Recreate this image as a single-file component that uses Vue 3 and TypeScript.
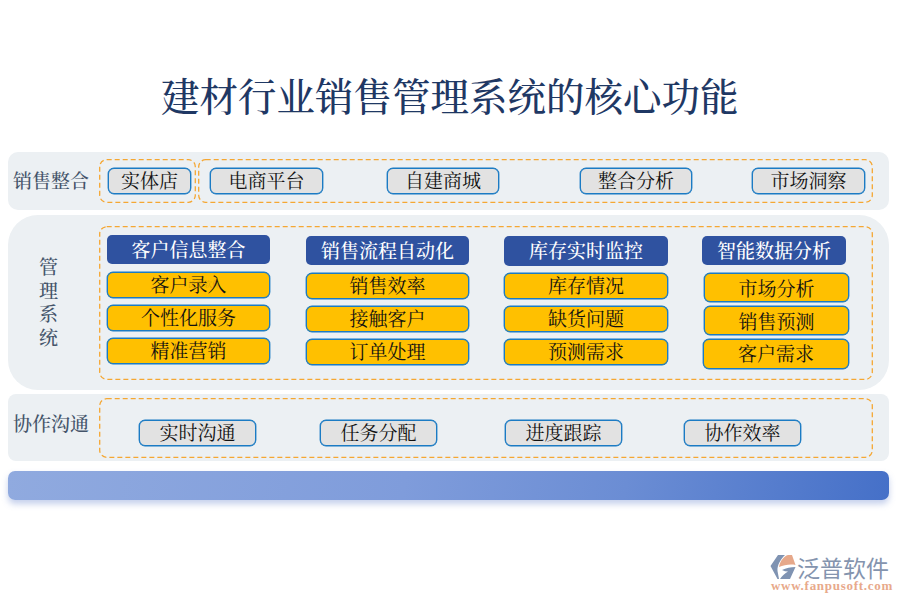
<script setup lang="ts">
const topChips: string[] = ['电商平台', '自建商城', '整合分析', '市场洞察']
const columns: { title: string; items: string[] }[] = [
  { title: '客户信息整合', items: ['客户录入', '个性化服务', '精准营销'] },
  { title: '销售流程自动化', items: ['销售效率', '接触客户', '订单处理'] },
  { title: '库存实时监控', items: ['库存情况', '缺货问题', '预测需求'] },
  { title: '智能数据分析', items: ['市场分析', '销售预测', '客户需求'] },
]
const collab: string[] = ['实时沟通', '任务分配', '进度跟踪', '协作效率']
</script>

<template>
  <div class="page">
    <h1 class="title">建材行业销售管理系统的核心功能</h1>

    <section class="band band-top">
      <div class="band-label">销售整合</div>
      <div class="dash dash-store">
        <svg class="dash-line"><rect /></svg>
        <span class="chip store">实体店</span>
      </div>
      <div class="dash dash-online">
        <svg class="dash-line"><rect /></svg>
        <span v-for="c in topChips" :key="c" class="chip wide">{{ c }}</span>
      </div>
    </section>

    <section class="band band-mgmt">
      <div class="mgmt-label">管理系统</div>
      <div class="dash dash-mgmt">
        <svg class="dash-line"><rect /></svg>
        <div v-for="col in columns" :key="col.title" class="col">
          <div class="col-head">{{ col.title }}</div>
          <div v-for="item in col.items" :key="item" class="item">{{ item }}</div>
        </div>
        <span class="ghost">泛普软件</span>
      </div>
    </section>

    <section class="band band-collab">
      <div class="band-label collab-label">协作沟通</div>
      <div class="dash dash-collab">
        <svg class="dash-line"><rect /></svg>
        <span v-for="c in collab" :key="c" class="chip cwide">{{ c }}</span>
      </div>
    </section>

    <div class="bar"></div>

    <div class="logo">
      <svg class="logo-icon" width="26" height="26" viewBox="0 0 26 26">
        <path d="M0.5 12 L8 1 H15 C11 5 7 11 7.5 17 L9 25 H7.5 Z" fill="#7f93b2" />
        <path d="M9 13 C10 7 14 2 18 1 H22 L25.5 11 C20 10 14 11 9 13 Z" fill="#e6a88a" />
        <path d="M12 16 C16 14 21 13 25.5 13 L20 25 H10 C12 22 15 19 18 17.5 C16 17.5 14 17 12 16 Z" fill="#7f93b2" />
      </svg>
      <div class="logo-name">泛普软件</div>
      <div class="logo-url">www.fanpusoft.com</div>
    </div>
  </div>
</template>

<style>
html, body { margin: 0; background: #fff; }
</style>

<style scoped>
.page {
  position: relative;
  box-sizing: border-box;
  width: 900px;
  height: 600px;
  overflow: hidden;
  padding-top: 68px;
  font-family: "Noto Serif CJK SC", "Noto Sans CJK SC", serif;
}
.title {
  margin: 0 0 0 161px;
  height: 84px;
  font-size: 38.5px;
  line-height: 54px;
  font-weight: 500;
  color: #1f3864;
  white-space: nowrap;
}
.band {
  box-sizing: border-box;
  display: flex;
  margin-left: 8px;
  width: 881px;
  background: #ecf0f3;
}
.band-top {
  height: 58px;
  border-radius: 10px;
  padding-top: 7px;
}
.band-label {
  width: 91px;
  padding-left: 5px;
  box-sizing: border-box;
  font-size: 19px;
  line-height: 42px;
  color: #44546a;
  font-weight: 500;
  white-space: nowrap;
}
.dash {
  position: relative;
  box-sizing: border-box;
  border: 1px solid transparent;
}
.dash-line {
  position: absolute;
  left: -1px;
  top: -1px;
  width: calc(100% + 2px);
  height: calc(100% + 2px);
  pointer-events: none;
}
.dash-line rect {
  x: 0.7px;
  y: 0.7px;
  width: calc(100% - 1.4px);
  height: calc(100% - 1.4px);
  rx: 7px;
  fill: none;
  stroke: #f5a733;
  stroke-width: 1.3px;
  stroke-dasharray: 5 3;
}
.dash-store {
  width: 97px;
  height: 44px;
  padding: 8px 0 0 8px;
}
.dash-online {
  width: 675px;
  height: 44px;
  margin-left: 2px;
  padding: 8px 0 0 11px;
  display: flex;
}
.dash-online .chip:nth-of-type(2) { margin-left: 64px; width: 112px; }
.dash-online .chip:nth-of-type(3) { margin-left: 81px; width: 112px; }
.dash-online .chip:nth-of-type(4) { margin-left: 60px; }
.chip {
  box-sizing: border-box;
  display: block;
  height: 26px;
  border: 1px solid #1b7bc4;
  box-shadow: 0 0 0 0.4px #1b7bc4;
  border-radius: 6px;
  background: #e2e2e2;
  color: #111;
  font-size: 19px;
  line-height: 22px;
  text-align: center;
  white-space: nowrap;
}
.store { width: 83px; }
.wide { width: 113px; }
.cwide { width: 117px; }

.band-mgmt {
  height: 175px;
  margin-top: 5px;
  border-radius: 30px;
  padding-top: 11px;
}
.mgmt-label {
  width: 91px;
  box-sizing: border-box;
  padding: 28px 31px 0 31px;
  font-size: 19px;
  line-height: 23.5px;
  font-weight: 500;
  color: #44546a;
}
.dash-mgmt {
  width: 774px;
  height: 154px;
  display: flex;
  padding: 8px 0 0 7px;
}
.col { width: 163px; flex: none; }
.col:nth-of-type(2) { margin-left: 36px; }
.col:nth-of-type(3) { width: 164px; margin-left: 35px; }
.col:nth-of-type(4) { width: 147px; margin-left: 34px; }
.col-head {
  box-sizing: border-box;
  height: 29px;
  border-radius: 5px;
  background: #2f52a0;
  color: #fff;
  font-size: 19px;
  line-height: 28px;
  font-weight: 500;
  text-align: center;
  white-space: nowrap;
}
.col:not(:nth-of-type(1)) .col-head { margin-top: 1px; }
.col:nth-of-type(3) .col-head { height: 30px; }
.col:nth-of-type(4) .col-head { width: 144px; }
.item {
  box-sizing: border-box;
  height: 26px;
  margin-top: 7px;
  border: 1px solid #1b7bc4;
  box-shadow: 0 0 0 0.4px #1b7bc4;
  border-radius: 6px;
  background: #ffc000;
  color: #111;
  font-size: 19px;
  line-height: 22px;
  text-align: center;
  white-space: nowrap;
}
.col-head + .item { margin-top: 8px; }
.col:nth-of-type(3) .col-head + .item { margin-top: 7px; }
.col:nth-of-type(4) .item { height: 29px; line-height: 27px; margin-top: 4px; margin-left: 2px; }
.col:nth-of-type(4) .col-head + .item { margin-top: 8px; }
.col:nth-of-type(4) .item:last-child { height: 30px; line-height: 26px; margin-left: 1px; }
.ghost {
  position: absolute;
  left: 88px;
  top: 52px;
  font-size: 8px;
  line-height: 10px;
  color: #8a6a20;
  opacity: 0.35;
  white-space: nowrap;
}

.band-collab {
  height: 67px;
  margin-top: 4px;
  border-radius: 8px;
  padding-top: 4px;
}
.collab-label { padding-top: 4px; }
.dash-collab {
  width: 774px;
  height: 60px;
  display: flex;
  padding: 21px 0 0 39px;
}
.dash-collab .chip:nth-of-type(2) { margin-left: 64px; }
.dash-collab .chip:nth-of-type(3) { margin-left: 68px; }
.dash-collab .chip:nth-of-type(4) { margin-left: 62px; }

.bar {
  margin: 10px 0 0 8px;
  width: 881px;
  height: 29px;
  border-radius: 7px;
  background: linear-gradient(100deg, #90aadf 0%, #7f9cdb 45%, #6b8dd4 70%, #4570c8 100%);
  box-shadow: 0 4px 6px rgba(90, 120, 200, 0.35);
}

.logo {
  position: absolute;
  left: 770px;
  top: 554px;
  width: 124px;
  height: 40px;
}
.logo-icon { position: absolute; left: 0; top: 0; }
.logo-name {
  position: absolute;
  left: 27px;
  top: 0;
  font-family: "Noto Sans CJK SC", sans-serif;
  font-size: 23px;
  line-height: 26px;
  color: #8494ae;
  white-space: nowrap;
}
.logo-url {
  position: absolute;
  left: 1px;
  top: 26px;
  font-family: "Liberation Serif", serif;
  font-size: 13px;
  line-height: 12px;
  font-weight: 700;
  letter-spacing: 0.72px;
  color: #e8a98b;
  white-space: nowrap;
}
</style>
